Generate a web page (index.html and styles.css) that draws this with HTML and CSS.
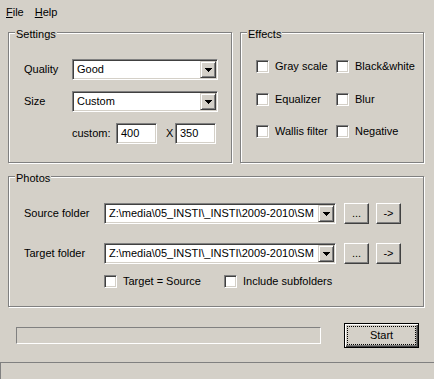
FILE: index.html
```html
<!DOCTYPE html>
<html>
<head>
<meta charset="utf-8">
<link rel="stylesheet" href="styles.css">
</head>
<body>
<div class="menubar">
  <span class="menu-item"><u>F</u>ile</span>
  <span class="menu-item"><u>H</u>elp</span>
</div>
<main class="content">
  <div class="top-row">
    <section class="group settings">
      <span class="legend">Settings</span>
      <div class="settings-grid">
        <span class="lbl">Quality</span>
        <div class="combo"><span class="combo-text">Good</span><span class="drop"><svg width="7" height="4" viewBox="0 0 7 4"><path d="M0 0h7v1H0zM1 1h5v1H1zM2 2h3v1H2zM3 3h1v1H3z" fill="#000"/></svg></span></div>
        <span class="lbl">Size</span>
        <div class="combo"><span class="combo-text">Custom</span><span class="drop"><svg width="7" height="4" viewBox="0 0 7 4"><path d="M0 0h7v1H0zM1 1h5v1H1zM2 2h3v1H2zM3 3h1v1H3z" fill="#000"/></svg></span></div>
        <span></span>
        <div class="custom-row">
          <span class="custom-lbl">custom:</span>
          <span class="field">400</span>
          <span class="times">X</span>
          <span class="field">350</span>
        </div>
      </div>
    </section>
    <section class="group effects">
      <span class="legend">Effects</span>
      <div class="effects-grid">
        <label class="check"><span class="box"></span>Gray scale</label>
        <label class="check"><span class="box"></span>Black&amp;white</label>
        <label class="check"><span class="box"></span>Equalizer</label>
        <label class="check"><span class="box"></span>Blur</label>
        <label class="check"><span class="box"></span>Wallis filter</label>
        <label class="check"><span class="box"></span>Negative</label>
      </div>
    </section>
  </div>
  <section class="group photos">
    <span class="legend">Photos</span>
    <div class="folder-row">
      <span class="folder-lbl">Source folder</span>
      <div class="combo wide"><span class="combo-text">Z:\media\05_INSTI\_INSTI\2009-2010\SM</span><span class="drop"><svg width="7" height="4" viewBox="0 0 7 4"><path d="M0 0h7v1H0zM1 1h5v1H1zM2 2h3v1H2zM3 3h1v1H3z" fill="#000"/></svg></span></div>
      <button class="btn small browse">...</button>
      <button class="btn small go">-&gt;</button>
    </div>
    <div class="folder-row second">
      <span class="folder-lbl">Target folder</span>
      <div class="combo wide"><span class="combo-text">Z:\media\05_INSTI\_INSTI\2009-2010\SM</span><span class="drop"><svg width="7" height="4" viewBox="0 0 7 4"><path d="M0 0h7v1H0zM1 1h5v1H1zM2 2h3v1H2zM3 3h1v1H3z" fill="#000"/></svg></span></div>
      <button class="btn small browse">...</button>
      <button class="btn small go">-&gt;</button>
    </div>
    <div class="photo-checks">
      <label class="check first"><span class="box"></span>Target = Source</label>
      <label class="check"><span class="box"></span>Include subfolders</label>
    </div>
  </section>
  <div class="action-row">
    <div class="progress"></div>
    <button class="btn start">Start</button>
  </div>
</main>
<div class="statusbar"></div>
</body>
</html>
```
FILE: styles.css
```css
html, body {
  margin: 0;
  padding: 0;
}
body {
  width: 434px;
  height: 379px;
  overflow: hidden;
  background: #D4D0C8;
  font: 11px/13px "Liberation Sans", Arial, sans-serif;
  color: #000;
  display: flex;
  flex-direction: column;
}
.menubar {
  height: 20px;
  box-sizing: border-box;
  padding: 6px 0 0 6px;
  display: flex;
  gap: 11px;
}
.menu-item u {
  text-decoration: underline;
  text-underline-offset: 1px;
}
.content {
  padding: 12px 10px 0 8px;
  display: flex;
  flex-direction: column;
}
.top-row {
  display: flex;
  gap: 8px;
}
.group {
  position: relative;
  box-sizing: border-box;
  height: 131px;
  border: 1px solid #808080;
  box-shadow: 1px 1px 0 #fff, inset 1px 1px 0 #fff;
}
.legend {
  position: absolute;
  top: -5px;
  left: 6px;
  padding: 0 1px;
  background: #D4D0C8;
  line-height: 13px;
}
.settings {
  width: 224px;
  padding: 26px 0 0 15px;
}
.effects {
  width: 184px;
  padding: 27px 0 0 15px;
}
.photos {
  width: 416px;
  margin-top: 13px;
  padding: 26px 0 0 15px;
}
.settings-grid {
  display: grid;
  grid-template-columns: 48px 146px;
  grid-auto-rows: 21px;
  row-gap: 11px;
  align-items: center;
}
.combo {
  box-sizing: border-box;
  height: 21px;
  background: #fff;
  border: 1px solid;
  border-color: #808080 #fff #fff #808080;
  box-shadow: inset 1px 1px 0 #404040, inset -1px -1px 0 #D4D0C8;
  padding: 1px;
  display: flex;
  align-items: stretch;
}
.combo-text {
  flex: 1;
  overflow: hidden;
  white-space: nowrap;
  padding-left: 3px;
  align-self: center;
}
.drop {
  box-sizing: border-box;
  width: 16px;
  background: #D4D0C8;
  border: 1px solid;
  border-color: #D4D0C8 #404040 #404040 #D4D0C8;
  box-shadow: inset 1px 1px 0 #fff, inset -1px -1px 0 #808080;
  display: flex;
  align-items: center;
  justify-content: center;
}
.drop svg {
  display: block;
}
.custom-row {
  display: flex;
  align-items: center;
  height: 21px;
}
.custom-lbl {
  width: 44px;
}
.field {
  box-sizing: border-box;
  width: 41px;
  height: 21px;
  background: #fff;
  border: 1px solid;
  border-color: #808080 #fff #fff #808080;
  box-shadow: inset 1px 1px 0 #404040, inset -1px -1px 0 #D4D0C8;
  padding: 3px 0 0 4px;
}
.times {
  width: 18px;
  box-sizing: border-box;
  padding-left: 9px;
}
.effects-grid {
  display: grid;
  grid-template-columns: 80px 80px;
  grid-template-rows: 33px 32px 13px;
  align-items: start;
}
.check {
  display: flex;
  align-items: center;
  gap: 6px;
  height: 13px;
  white-space: nowrap;
}
.box {
  box-sizing: border-box;
  width: 13px;
  height: 13px;
  flex: none;
  background: #fff;
  border: 1px solid;
  border-color: #808080 #fff #fff #808080;
  box-shadow: inset 1px 1px 0 #404040, inset -1px -1px 0 #D4D0C8;
}
.folder-row {
  display: flex;
  align-items: center;
  height: 21px;
}
.folder-row.second {
  margin-top: 19px;
}
.folder-lbl {
  width: 80px;
}
.combo.wide {
  width: 232px;
}
.btn {
  box-sizing: border-box;
  background: #D4D0C8;
  border: 1px solid;
  border-color: #fff #404040 #404040 #fff;
  box-shadow: inset -1px -1px 0 #808080;
  font: 11px/13px "Liberation Sans", Arial, sans-serif;
  color: #000;
  padding: 0;
  margin: 0;
}
.btn.small {
  width: 25px;
  height: 21px;
}
.btn.browse {
  margin-left: 8px;
}
.btn.go {
  margin-left: 7px;
}
.photo-checks {
  display: flex;
  margin: 11px 0 0 80px;
}
.photo-checks .first {
  width: 120px;
}
.action-row {
  display: flex;
  align-items: center;
  margin-top: 16px;
  padding-left: 8px;
}
.progress {
  box-sizing: border-box;
  width: 305px;
  height: 17px;
  border: 1px solid;
  border-color: #808080 #fff #fff #808080;
  margin-right: 23px;
}
.btn.start {
  position: relative;
  width: 75px;
  height: 25px;
  border: 1px solid #000;
  box-shadow: inset 1px 1px 0 #fff, inset -1px -1px 0 #404040, inset -2px -2px 0 #808080;
}
.btn.start::after {
  content: "";
  position: absolute;
  left: 2px;
  top: 2px;
  right: 2px;
  bottom: 2px;
  border: 1px dotted #000;
}
.statusbar {
  margin-top: auto;
  height: 17px;
  box-sizing: border-box;
  border-top: 1px solid #808080;
  border-left: 1px solid #808080;
}
```
